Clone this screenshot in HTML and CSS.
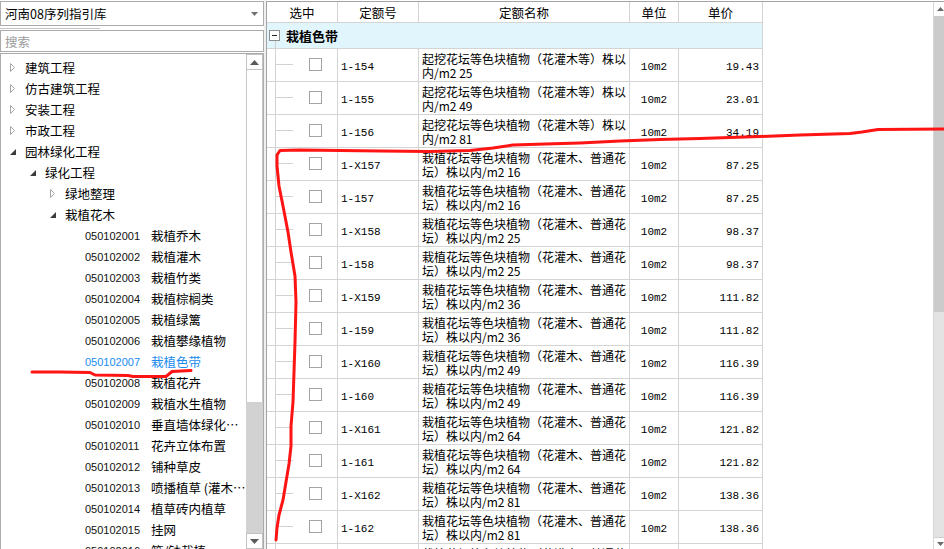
FILE: index.html
```html
<!DOCTYPE html>
<html lang="zh-CN">
<head>
<meta charset="utf-8">
<title>河南08序列指引库</title>
<link rel="stylesheet" href="styles.css">
</head>
<body>
<div class="app">
  <aside class="side">
    <div class="combo">
      <span>河南08序列指引库</span>
      <svg class="combo-arrow" width="7" height="4" viewBox="0 0 7 4"><polygon points="0,0 7,0 3.5,4" fill="#707070"/></svg>
    </div>
    <div class="gap"></div>
    <div class="search">搜索</div>
    <div class="treebox">
      <div class="tree">
        <div class="node l0"><span class="tg"><svg width="6" height="9" viewBox="0 0 6 9"><polygon points="0.5,0.5 4.5,4.5 0.5,8.5" fill="#fff" stroke="#a6a6a6"/></svg></span><span>建筑工程</span></div>
        <div class="node l0"><span class="tg"><svg width="6" height="9" viewBox="0 0 6 9"><polygon points="0.5,0.5 4.5,4.5 0.5,8.5" fill="#fff" stroke="#a6a6a6"/></svg></span><span>仿古建筑工程</span></div>
        <div class="node l0"><span class="tg"><svg width="6" height="9" viewBox="0 0 6 9"><polygon points="0.5,0.5 4.5,4.5 0.5,8.5" fill="#fff" stroke="#a6a6a6"/></svg></span><span>安装工程</span></div>
        <div class="node l0"><span class="tg"><svg width="6" height="9" viewBox="0 0 6 9"><polygon points="0.5,0.5 4.5,4.5 0.5,8.5" fill="#fff" stroke="#a6a6a6"/></svg></span><span>市政工程</span></div>
        <div class="node l0"><span class="tg"><svg width="6" height="6" viewBox="0 0 6 6"><polygon points="6,0 6,6 0,6" fill="#3c3c3c"/></svg></span><span>园林绿化工程</span></div>
        <div class="node l1"><span class="tg"><svg width="6" height="6" viewBox="0 0 6 6"><polygon points="6,0 6,6 0,6" fill="#3c3c3c"/></svg></span><span>绿化工程</span></div>
        <div class="node l2"><span class="tg"><svg width="6" height="9" viewBox="0 0 6 9"><polygon points="0.5,0.5 4.5,4.5 0.5,8.5" fill="#fff" stroke="#a6a6a6"/></svg></span><span>绿地整理</span></div>
        <div class="node l2"><span class="tg"><svg width="6" height="6" viewBox="0 0 6 6"><polygon points="6,0 6,6 0,6" fill="#3c3c3c"/></svg></span><span>栽植花木</span></div>
        <div class="node l3"><span class="code">050102001</span><span class="name">栽植乔木</span></div>
        <div class="node l3"><span class="code">050102002</span><span class="name">栽植灌木</span></div>
        <div class="node l3"><span class="code">050102003</span><span class="name">栽植竹类</span></div>
        <div class="node l3"><span class="code">050102004</span><span class="name">栽植棕榈类</span></div>
        <div class="node l3"><span class="code">050102005</span><span class="name">栽植绿篱</span></div>
        <div class="node l3"><span class="code">050102006</span><span class="name">栽植攀缘植物</span></div>
        <div class="node l3 sel"><span class="code">050102007</span><span class="name">栽植色带</span></div>
        <div class="node l3"><span class="code">050102008</span><span class="name">栽植花卉</span></div>
        <div class="node l3"><span class="code">050102009</span><span class="name">栽植水生植物</span></div>
        <div class="node l3"><span class="code">050102010</span><span class="name">垂直墙体绿化…</span></div>
        <div class="node l3"><span class="code">050102011</span><span class="name">花卉立体布置</span></div>
        <div class="node l3"><span class="code">050102012</span><span class="name">铺种草皮</span></div>
        <div class="node l3"><span class="code">050102013</span><span class="name">喷播植草 (灌木…</span></div>
        <div class="node l3"><span class="code">050102014</span><span class="name">植草砖内植草</span></div>
        <div class="node l3"><span class="code">050102015</span><span class="name">挂网</span></div>
        <div class="node l3"><span class="code">050102016</span><span class="name">箱/钵栽植</span></div>
      </div>
      <div class="vsb">
        <div class="sb-btn"><svg width="9" height="5" viewBox="0 0 9 5"><polygon points="0,5 9,5 4.5,0" fill="#5a5a5a"/></svg></div>
        <div class="sb-thumb"></div>
        <div class="sb-track"></div>
        <div class="sb-btn"><svg width="9" height="5" viewBox="0 0 9 5"><polygon points="0,0 9,0 4.5,5" fill="#5a5a5a"/></svg></div>
      </div>
    </div>
  </aside>
  <div class="splitter"></div>
  <section class="gridpane">
    <div class="gridwrap">
      <div class="grid">
        <div class="hc">选中</div>
        <div class="hc">定额号</div>
        <div class="hc">定额名称</div>
        <div class="hc">单位</div>
        <div class="hc">单价</div>

        <div class="grp"><span class="minus"></span><span class="grp-title">栽植色带</span></div>

        <div class="c0"><span class="chk"></span></div><div class="c1">1-154</div><div class="c2">起挖花坛等色块植物（花灌木等）株以<br>内/m2 25</div><div class="c3">10m2</div><div class="c4">19.43</div>
        <div class="c0"><span class="chk"></span></div><div class="c1">1-155</div><div class="c2">起挖花坛等色块植物（花灌木等）株以<br>内/m2 49</div><div class="c3">10m2</div><div class="c4">23.01</div>
        <div class="c0"><span class="chk"></span></div><div class="c1">1-156</div><div class="c2">起挖花坛等色块植物（花灌木等）株以<br>内/m2 81</div><div class="c3">10m2</div><div class="c4">34.19</div>
        <div class="c0"><span class="chk"></span></div><div class="c1">1-X157</div><div class="c2">栽植花坛等色块植物（花灌木、普通花<br>坛）株以内/m2 16</div><div class="c3">10m2</div><div class="c4">87.25</div>
        <div class="c0"><span class="chk"></span></div><div class="c1">1-157</div><div class="c2">栽植花坛等色块植物（花灌木、普通花<br>坛）株以内/m2 16</div><div class="c3">10m2</div><div class="c4">87.25</div>
        <div class="c0"><span class="chk"></span></div><div class="c1">1-X158</div><div class="c2">栽植花坛等色块植物（花灌木、普通花<br>坛）株以内/m2 25</div><div class="c3">10m2</div><div class="c4">98.37</div>
        <div class="c0"><span class="chk"></span></div><div class="c1">1-158</div><div class="c2">栽植花坛等色块植物（花灌木、普通花<br>坛）株以内/m2 25</div><div class="c3">10m2</div><div class="c4">98.37</div>
        <div class="c0"><span class="chk"></span></div><div class="c1">1-X159</div><div class="c2">栽植花坛等色块植物（花灌木、普通花<br>坛）株以内/m2 36</div><div class="c3">10m2</div><div class="c4">111.82</div>
        <div class="c0"><span class="chk"></span></div><div class="c1">1-159</div><div class="c2">栽植花坛等色块植物（花灌木、普通花<br>坛）株以内/m2 36</div><div class="c3">10m2</div><div class="c4">111.82</div>
        <div class="c0"><span class="chk"></span></div><div class="c1">1-X160</div><div class="c2">栽植花坛等色块植物（花灌木、普通花<br>坛）株以内/m2 49</div><div class="c3">10m2</div><div class="c4">116.39</div>
        <div class="c0"><span class="chk"></span></div><div class="c1">1-160</div><div class="c2">栽植花坛等色块植物（花灌木、普通花<br>坛）株以内/m2 49</div><div class="c3">10m2</div><div class="c4">116.39</div>
        <div class="c0"><span class="chk"></span></div><div class="c1">1-X161</div><div class="c2">栽植花坛等色块植物（花灌木、普通花<br>坛）株以内/m2 64</div><div class="c3">10m2</div><div class="c4">121.82</div>
        <div class="c0"><span class="chk"></span></div><div class="c1">1-161</div><div class="c2">栽植花坛等色块植物（花灌木、普通花<br>坛）株以内/m2 64</div><div class="c3">10m2</div><div class="c4">121.82</div>
        <div class="c0"><span class="chk"></span></div><div class="c1">1-X162</div><div class="c2">栽植花坛等色块植物（花灌木、普通花<br>坛）株以内/m2 81</div><div class="c3">10m2</div><div class="c4">138.36</div>
        <div class="c0"><span class="chk"></span></div><div class="c1">1-162</div><div class="c2">栽植花坛等色块植物（花灌木、普通花<br>坛）株以内/m2 81</div><div class="c3">10m2</div><div class="c4">138.36</div>
        <div class="c0"><span class="chk"></span></div><div class="c1">1-X163</div><div class="c2">栽植花坛等色块植物（花灌木、普通花<br>坛）株以内/m2 100</div><div class="c3">10m2</div><div class="c4">152.47</div>
      </div>
    </div>
    <div class="gsb">
      <div class="gsb-btn"><svg width="7" height="4" viewBox="0 0 7 4"><polygon points="0,4 7,4 3.5,0" fill="#6a6a6a"/></svg></div>
      <div class="gsb-thumb"></div>
      <div class="gsb-track"></div>
      <div class="gsb-btn down"><svg width="7" height="4" viewBox="0 0 7 4"><polygon points="0,0 7,0 3.5,4" fill="#6a6a6a"/></svg></div>
    </div>
  </section>
  <svg class="annot" width="944" height="549" viewBox="0 0 944 549">
    <polyline points="32,372 60,372 90,372.5 95,375 128,375.5 133,376.5 166,376.5 172,371.5 191,370.5" fill="none" stroke="#ff1414" stroke-width="3" stroke-linecap="round" stroke-linejoin="round"/>
    <polyline points="276,540 277,528 279,515 283,500 286,482 289,464 291,446 291,426 293,402 294,372 295,342 296,302 295,276 291,252 288,232 283,206 279,186 277,166 277,155 280,150.5 300,150 340,150.5 380,151 430,151.5 470,150.5 493,148 513,145 545,144 580,143 620,141 660,139.5 700,138.5 760,136.5 800,135 850,133.5 862,132 878,129.5 944,129" fill="none" stroke="#ff1414" stroke-width="3" stroke-linecap="round" stroke-linejoin="round"/>
  </svg>
</div>
</body>
</html>
```

FILE: styles.css
```css
* { box-sizing: border-box; }

html, body {
  margin: 0;
  padding: 0;
}

body {
  width: 944px;
  height: 549px;
  overflow: hidden;
  background: #fff;
  color: #000;
  font-family: "Noto Sans CJK SC", "Noto Sans", sans-serif;
  font-size: 12px;
}

.app {
  position: relative;
  display: flex;
  width: 944px;
  height: 549px;
}

/* ---------- left side ---------- */
.side {
  width: 264px;
  flex: none;
  display: flex;
  flex-direction: column;
}

.combo {
  margin-top: 1px;
  height: 25px;
  border: 1px solid #ababab;
  display: flex;
  align-items: center;
  justify-content: space-between;
  padding: 0 5px 0 4px;
  font-size: 12.5px;
}

.gap {
  height: 4px;
  padding-top: 2px;
}
.gap::before {
  content: "";
  display: block;
  width: 100px;
  height: 1px;
  background: #c4c4c4;
}

.search {
  height: 22px;
  border: 1px solid #ababab;
  padding-left: 4px;
  display: flex;
  align-items: center;
  color: #9b9b9b;
  font-size: 12.5px;
}

.treebox {
  margin-top: 1px;
  flex: 1;
  min-height: 0;
  border: 1px solid #ababab;
  border-bottom: none;
  display: flex;
}

.tree {
  flex: 1;
  min-width: 0;
  padding-top: 3px;
  overflow: hidden;
}

.node {
  height: 21px;
  display: flex;
  align-items: center;
  white-space: nowrap;
  font-size: 12.5px;
}

.l0 { padding-left: 8px; }
.l1 { padding-left: 28px; }
.l2 { padding-left: 48px; }
.l3 { padding-left: 84px; }

.tg {
  width: 16px;
  flex: none;
  display: flex;
  align-items: center;
  padding-left: 1px;
}

.code {
  width: 66px;
  flex: none;
  font-family: "Liberation Sans", Arial, sans-serif;
  font-size: 11px;
  color: #111;
}

.name {
  overflow: hidden;
}

.sel .code, .sel .name { color: #1a8cf0; }

.vsb {
  width: 17px;
  flex: none;
  display: flex;
  flex-direction: column;
  background: #d4d4d4;
}

.sb-btn {
  height: 16px;
  flex: none;
  background: #fff;
  border: 1px solid #c2c2c2;
  display: flex;
  align-items: center;
  justify-content: center;
}

.sb-thumb {
  height: 332px;
  flex: none;
  background: #fff;
  border-left: 1px solid #c8c8c8;
  border-right: 1px solid #c8c8c8;
}

.sb-track {
  flex: 1;
  background: #d2d2d2;
}

/* ---------- splitter ---------- */
.splitter {
  width: 2px;
  flex: none;
  background: #f0f0f0;
}

/* ---------- grid ---------- */
.gridpane {
  flex: 1;
  min-width: 0;
  margin-top: 1px;
  border-top: 1px solid #a3a3a3;
  border-left: 1px solid #a3a3a3;
  display: flex;
}

.gridwrap {
  flex: 1;
  min-width: 0;
  overflow: hidden;
}

.grid {
  width: 496px;
  display: grid;
  grid-template-columns: 71px 81px 211px 49px 84px;
}

.hc {
  height: 21px;
  border-right: 1px solid #d4d4d4;
  border-bottom: 1px solid #d4d4d4;
  display: flex;
  align-items: center;
  justify-content: center;
  font-size: 12.5px;
}

.grp {
  grid-column: 1 / -1;
  height: 26px;
  border-right: 1px solid #d4d4d4;
  border-bottom: 1px solid #d4d4d4;
  background:
    linear-gradient(#cfcfcf, #cfcfcf) no-repeat 8px 18px / 1px 8px,
    #e1f5fd;
  display: flex;
  align-items: center;
  padding-left: 2px;
}

.minus {
  width: 11px;
  height: 11px;
  flex: none;
  border: 1px solid #8e8e8e;
  background:
    linear-gradient(#222, #222) no-repeat 2px 4px / 5px 1px,
    #fff;
}

.grp-title {
  margin-left: 6px;
  font-weight: bold;
  font-size: 13px;
}

.c0, .c1, .c2, .c3, .c4 {
  height: 33px;
  border-right: 1px solid #d4d4d4;
  border-bottom: 1px solid #d4d4d4;
  overflow: hidden;
  white-space: nowrap;
}

.c0 {
  padding: 9px 0 0 42px;
  background:
    linear-gradient(#d2d2d2, #d2d2d2) no-repeat 8px 0 / 1px 100%,
    linear-gradient(#d2d2d2, #d2d2d2) no-repeat 8px 15px / 18px 1px,
    #fff;
}

.chk {
  display: block;
  width: 13px;
  height: 13px;
  border: 1px solid #a3a3a3;
  background: #fff;
}

.c1, .c3, .c4 {
  display: flex;
  align-items: center;
  padding-top: 3px;
  font-family: "Liberation Mono", "DejaVu Sans Mono", monospace;
  font-size: 11px;
}

.c1 { padding-left: 3px; }
.c3 { justify-content: center; }
.c4 { justify-content: flex-end; padding-right: 3px; }

.c2 {
  padding: 3px 0 0 3px;
  line-height: 14px;
  font-size: 12px;
}

/* right scrollbar */
.gsb {
  width: 11px;
  flex: none;
  display: flex;
  flex-direction: column;
  border-left: 1px solid #d6d6d6;
  background: #e3e3e3;
}

.gsb-btn {
  height: 14px;
  flex: none;
  background: #fff;
  display: flex;
  align-items: center;
  justify-content: flex-start;
  padding-left: 3px;
}

.gsb-btn.down {
  height: 12px;
  border-top: 1px solid #cfcfcf;
}

.gsb-thumb {
  height: 296px;
  flex: none;
  background: #cbcbcb;
}

.gsb-track {
  flex: 1;
  background: #e3e3e3;
}

/* hand-drawn annotation overlay */
.annot {
  position: absolute;
  left: 0;
  top: 0;
  pointer-events: none;
}
```
